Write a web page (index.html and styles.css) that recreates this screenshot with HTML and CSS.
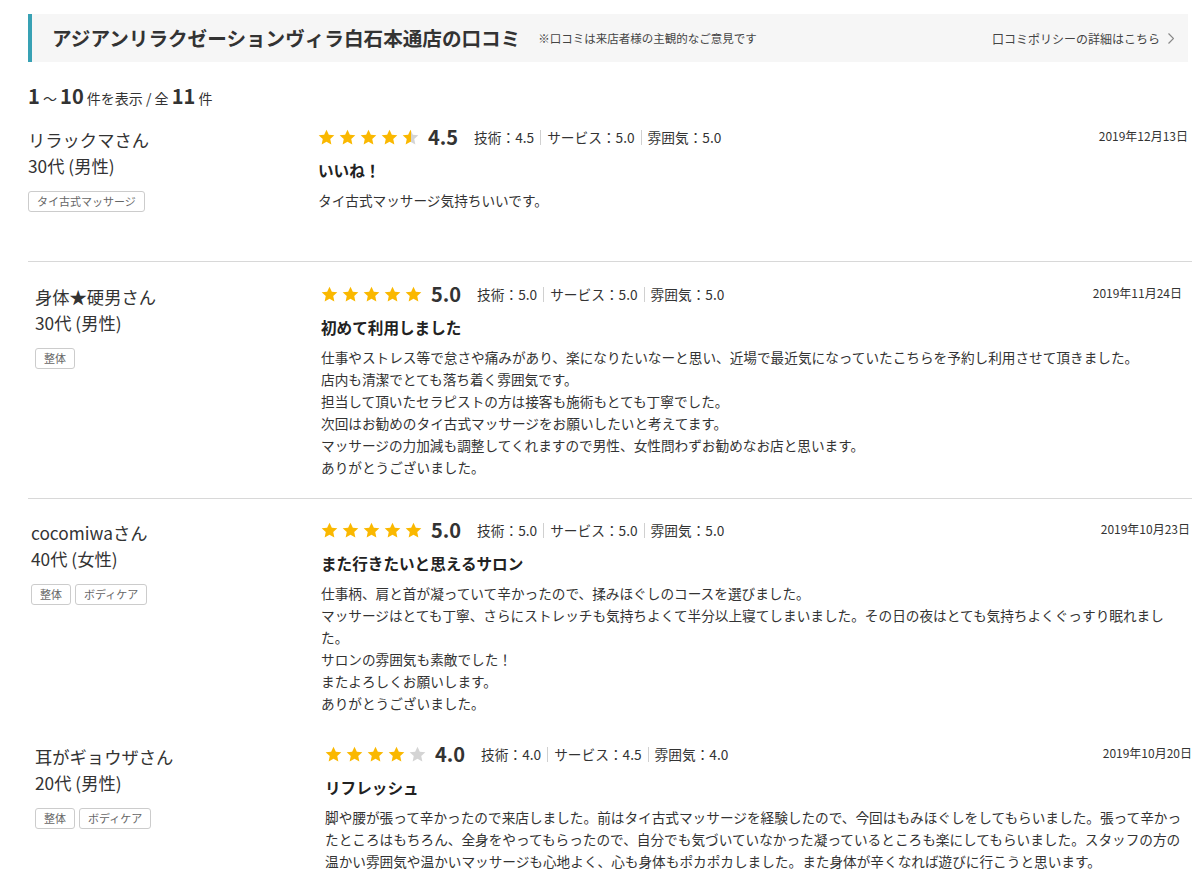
FILE: index.html
```html
<!DOCTYPE html>
<html lang="ja">
<head>
<meta charset="utf-8">
<title>口コミ</title>
<link rel="stylesheet" href="styles.css">
</head>
<body>
<svg class="svg-defs" aria-hidden="true">
  <defs>
    <symbol id="star" viewBox="0 0 20 20"><path d="M10 0.8l2.75 5.9 6.45 0.75-4.8 4.4 1.3 6.4L10 15.05l-5.7 3.2 1.3-6.4-4.8-4.4 6.45-0.75z"/></symbol>
    <linearGradient id="half"><stop offset="52%" stop-color="#fab800"/><stop offset="52%" stop-color="#d4d4d4"/></linearGradient>
  </defs>
</svg>
<div class="page">
  <header class="title-bar">
    <h2 class="title">アジアンリラクゼーションヴィラ白石本通店の口コミ</h2>
    <span class="note">※口コミは来店者様の主観的なご意見です</span>
    <a class="policy" href="#">口コミポリシーの詳細はこちら<svg class="chev" viewBox="0 0 6 11"><polyline points="0.5,0.5 5.5,5.5 0.5,10.5"/></svg></a>
  </header>
  <p class="count"><b>1</b> ～ <b>10</b> 件を表示 / 全 <b>11</b> 件</p>

  <ul class="reviews">
    <li class="review">
      <div class="reviewer">
        <p class="name">リラックマさん</p>
        <p class="age">30代 (男性)</p>
        <div class="tags"><span class="tag">タイ古式マッサージ</span></div>
      </div>
      <div class="content">
        <div class="rating-row">
          <div class="stars">
            <svg class="star"><use href="#star"/></svg>
            <svg class="star"><use href="#star"/></svg>
            <svg class="star"><use href="#star"/></svg>
            <svg class="star"><use href="#star"/></svg>
            <svg class="star half"><use href="#star"/></svg>
          </div>
          <span class="score">4.5</span>
          <div class="sub"><span>技術：4.5</span><span>サービス：5.0</span><span>雰囲気：5.0</span></div>
          <span class="date">2019年12月13日</span>
        </div>
        <h3 class="review-title">いいね！</h3>
        <p class="review-body">タイ古式マッサージ気持ちいいです。</p>
      </div>
    </li>

    <li class="review">
      <div class="reviewer">
        <p class="name">身体★硬男さん</p>
        <p class="age">30代 (男性)</p>
        <div class="tags"><span class="tag">整体</span></div>
      </div>
      <div class="content">
        <div class="rating-row">
          <div class="stars">
            <svg class="star"><use href="#star"/></svg>
            <svg class="star"><use href="#star"/></svg>
            <svg class="star"><use href="#star"/></svg>
            <svg class="star"><use href="#star"/></svg>
            <svg class="star"><use href="#star"/></svg>
          </div>
          <span class="score">5.0</span>
          <div class="sub"><span>技術：5.0</span><span>サービス：5.0</span><span>雰囲気：5.0</span></div>
          <span class="date">2019年11月24日</span>
        </div>
        <h3 class="review-title">初めて利用しました</h3>
        <p class="review-body">仕事やストレス等で怠さや痛みがあり、楽になりたいなーと思い、近場で最近気になっていたこちらを予約し利用させて頂きました。<br>店内も清潔でとても落ち着く雰囲気です。<br>担当して頂いたセラピストの方は接客も施術もとても丁寧でした。<br>次回はお勧めのタイ古式マッサージをお願いしたいと考えてます。<br>マッサージの力加減も調整してくれますので男性、女性問わずお勧めなお店と思います。<br>ありがとうございました。</p>
      </div>
    </li>

    <li class="review">
      <div class="reviewer">
        <p class="name">cocomiwaさん</p>
        <p class="age">40代 (女性)</p>
        <div class="tags"><span class="tag">整体</span><span class="tag">ボディケア</span></div>
      </div>
      <div class="content">
        <div class="rating-row">
          <div class="stars">
            <svg class="star"><use href="#star"/></svg>
            <svg class="star"><use href="#star"/></svg>
            <svg class="star"><use href="#star"/></svg>
            <svg class="star"><use href="#star"/></svg>
            <svg class="star"><use href="#star"/></svg>
          </div>
          <span class="score">5.0</span>
          <div class="sub"><span>技術：5.0</span><span>サービス：5.0</span><span>雰囲気：5.0</span></div>
          <span class="date">2019年10月23日</span>
        </div>
        <h3 class="review-title">また行きたいと思えるサロン</h3>
        <p class="review-body">仕事柄、肩と首が凝っていて辛かったので、揉みほぐしのコースを選びました。<br>マッサージはとても丁寧、さらにストレッチも気持ちよくて半分以上寝てしまいました。その日の夜はとても気持ちよくぐっすり眠れました。<br>サロンの雰囲気も素敵でした！<br>またよろしくお願いします。<br>ありがとうございました。</p>
      </div>
    </li>

    <li class="review">
      <div class="reviewer">
        <p class="name">耳がギョウザさん</p>
        <p class="age">20代 (男性)</p>
        <div class="tags"><span class="tag">整体</span><span class="tag">ボディケア</span></div>
      </div>
      <div class="content">
        <div class="rating-row">
          <div class="stars">
            <svg class="star"><use href="#star"/></svg>
            <svg class="star"><use href="#star"/></svg>
            <svg class="star"><use href="#star"/></svg>
            <svg class="star"><use href="#star"/></svg>
            <svg class="star off"><use href="#star"/></svg>
          </div>
          <span class="score">4.0</span>
          <div class="sub"><span>技術：4.0</span><span>サービス：4.5</span><span>雰囲気：4.0</span></div>
          <span class="date">2019年10月20日</span>
        </div>
        <h3 class="review-title">リフレッシュ</h3>
        <p class="review-body">脚や腰が張って辛かったので来店しました。前はタイ古式マッサージを経験したので、今回はもみほぐしをしてもらいました。張って辛かったところはもちろん、全身をやってもらったので、自分でも気づいていなかった凝っているところも楽にしてもらいました。スタッフの方の温かい雰囲気や温かいマッサージも心地よく、心も身体もポカポカしました。また身体が辛くなれば遊びに行こうと思います。</p>
      </div>
    </li>
  </ul>
</div>
</body>
</html>
```

FILE: styles.css
```css
* { box-sizing: border-box; }

body {
  margin: 0;
  background: #fff;
  color: #333;
  font-family: "Noto Sans CJK JP", "Noto Sans", sans-serif;
}

.svg-defs {
  position: absolute;
  width: 0;
  height: 0;
  overflow: hidden;
}

.page {
  width: 1200px;
  padding: 14px 8px 0 28px;
}

/* header bar */
.title-bar {
  display: flex;
  align-items: center;
  width: 1160px;
  height: 48px;
  background: #f6f6f6;
  border-left: 4px solid #38a1b4;
  padding: 0 14px 0 20px;
}

.title {
  margin: 0;
  font-size: 19.6px;
  font-weight: 700;
  line-height: 1;
  color: #333;
}

.note {
  margin-left: 18px;
  font-size: 11.5px;
  color: #444;
}

.policy {
  margin-left: auto;
  display: flex;
  align-items: center;
  gap: 8px;
  font-size: 12px;
  color: #444;
  text-decoration: none;
}

.chev {
  width: 6px;
  height: 11px;
  fill: none;
  stroke: #888;
  stroke-width: 1.2;
}

/* count */
.count {
  margin: 26px 0 0;
  height: 16px;
  font-size: 14px;
  line-height: 16px;
  color: #333;
}

.count b {
  font-size: 20px;
  font-weight: 700;
  line-height: 16px;
}

/* reviews */
.reviews {
  list-style: none;
  margin: 0;
  padding: 0;
  width: 1164px;
}

.review {
  display: flex;
  padding: 21px 0 20px;
  border-bottom: 1px solid #d8d8d8;
}

.review:nth-child(1) {
  padding-right: 4px;
  padding-bottom: 49px;
}

.review:nth-child(2) {
  padding-left: 7px;
  padding-right: 10px;
  padding-top: 20px;
}

.review:nth-child(2) .reviewer { width: 286px; }

.review:nth-child(3) {
  padding-left: 3px;
  padding-right: 2px;
  padding-top: 19px;
  padding-bottom: 5px;
  border-bottom: none;
}

.review:nth-child(4) {
  padding-left: 7px;
  padding-top: 23px;
  border-bottom: none;
}

.reviewer {
  width: 290px;
  flex-shrink: 0;
  padding-top: 2px;
}

.name,
.age {
  margin: 0;
  font-size: 17.3px;
  line-height: 26px;
  color: #333;
}

.tags {
  display: flex;
  gap: 4px;
  margin-top: 12px;
}

.tag {
  font-size: 11px;
  line-height: 19px;
  padding: 0 8px;
  border: 1px solid #ccc;
  border-radius: 3px;
  color: #666;
}

.content {
  flex: 1;
  min-width: 0;
}

.rating-row {
  display: flex;
  align-items: center;
  height: 24px;
}

.stars {
  display: flex;
  gap: 4px;
}

.star {
  width: 17px;
  height: 17px;
  fill: #fab800;
}

.star.off { fill: #d4d4d4; }
.star.half { fill: url(#half); }

.score {
  margin-left: 9px;
  font-size: 20px;
  font-weight: 700;
  color: #333;
  line-height: 24px;
}

.sub {
  display: flex;
  align-items: center;
  margin-left: 16px;
  font-size: 13.7px;
  color: #333;
}

.sub span + span {
  margin-left: 6px;
  padding-left: 6px;
  border-left: 1px solid #d0d0d0;
  line-height: 15px;
}

.date {
  margin-left: auto;
  margin-bottom: 4px;
  font-size: 12px;
  color: #333;
}

.review-title {
  margin: 9px 0 0;
  font-size: 15.6px;
  font-weight: 700;
  line-height: 24px;
  color: #222;
}

.review-body {
  margin: 7px 0 0;
  max-width: 866px;
  font-size: 13.65px;
  line-height: 22px;
  color: #333;
}
```
